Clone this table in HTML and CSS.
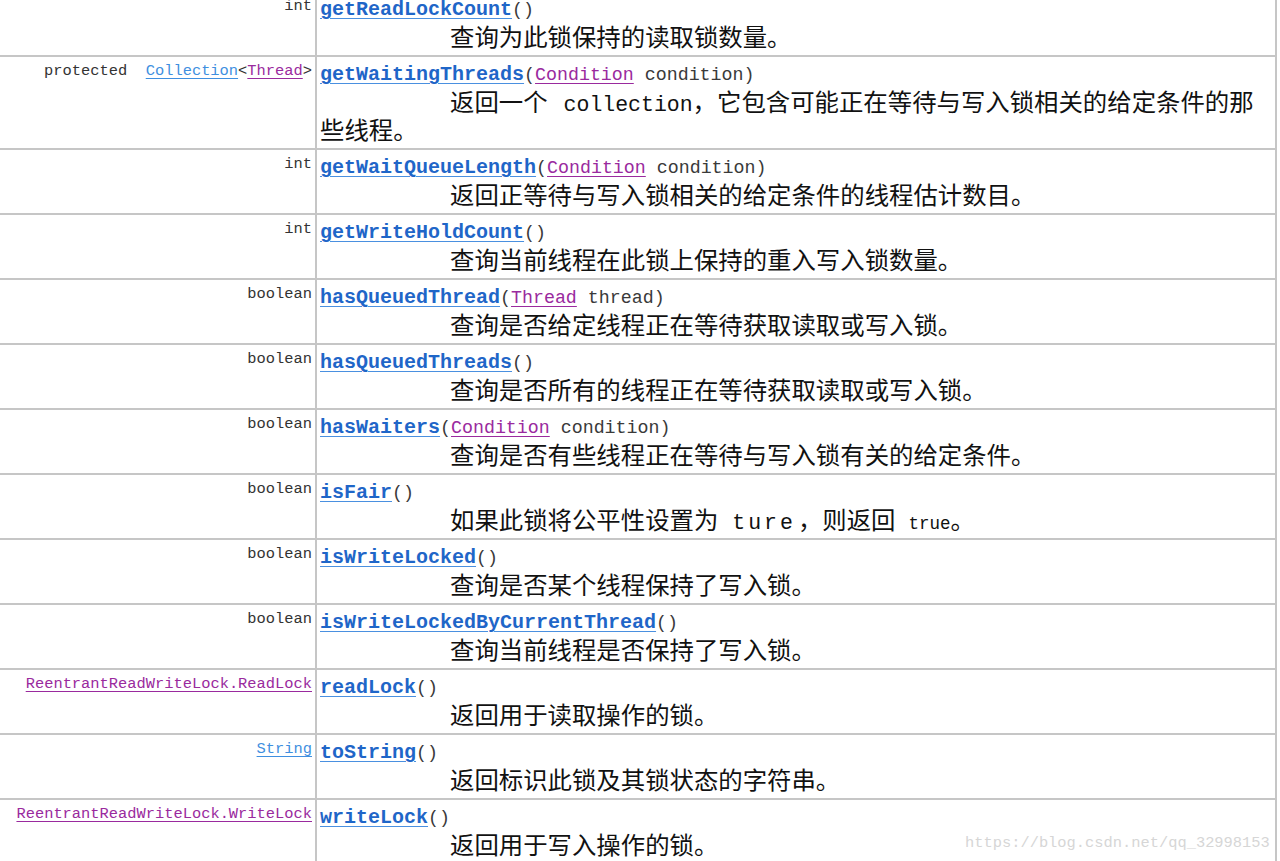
FILE: index.html
```html
<!DOCTYPE html>
<html lang="zh">
<head>
<meta charset="utf-8">
<title>ReentrantReadWriteLock</title>
<link rel="stylesheet" href="styles.css">
</head>
<body>
<div class="summary">
  <div class="row">
    <div class="type">int</div>
    <div class="member"><div class="sig"><a class="name">getReadLockCount</a>()</div><div class="desc">查询为此锁保持的读取锁数量。</div></div>
  </div>
  <div class="row">
    <div class="type">protected&nbsp;&nbsp;<a class="tlink">Collection</a>&lt;<a class="vlink">Thread</a>&gt;</div>
    <div class="member"><div class="sig"><a class="name">getWaitingThreads</a>(<a class="vlink">Condition</a> condition)</div><div class="desc">返回一个<span class="lat gap">collection</span>，它包含可能正在等待与写入锁相关的给定条件的那些线程。</div></div>
  </div>
  <div class="row">
    <div class="type">int</div>
    <div class="member"><div class="sig"><a class="name">getWaitQueueLength</a>(<a class="vlink">Condition</a> condition)</div><div class="desc">返回正等待与写入锁相关的给定条件的线程估计数目。</div></div>
  </div>
  <div class="row">
    <div class="type">int</div>
    <div class="member"><div class="sig"><a class="name">getWriteHoldCount</a>()</div><div class="desc">查询当前线程在此锁上保持的重入写入锁数量。</div></div>
  </div>
  <div class="row">
    <div class="type">boolean</div>
    <div class="member"><div class="sig"><a class="name">hasQueuedThread</a>(<a class="vlink">Thread</a> thread)</div><div class="desc">查询是否给定线程正在等待获取读取或写入锁。</div></div>
  </div>
  <div class="row">
    <div class="type">boolean</div>
    <div class="member"><div class="sig"><a class="name">hasQueuedThreads</a>()</div><div class="desc">查询是否所有的线程正在等待获取读取或写入锁。</div></div>
  </div>
  <div class="row">
    <div class="type">boolean</div>
    <div class="member"><div class="sig"><a class="name">hasWaiters</a>(<a class="vlink">Condition</a> condition)</div><div class="desc">查询是否有些线程正在等待与写入锁有关的给定条件。</div></div>
  </div>
  <div class="row">
    <div class="type">boolean</div>
    <div class="member"><div class="sig"><a class="name">isFair</a>()</div><div class="desc">如果此锁将公平性设置为<span class="lat wide">ture</span>，则返回<code class="code">true</code>。</div></div>
  </div>
  <div class="row">
    <div class="type">boolean</div>
    <div class="member"><div class="sig"><a class="name">isWriteLocked</a>()</div><div class="desc">查询是否某个线程保持了写入锁。</div></div>
  </div>
  <div class="row">
    <div class="type">boolean</div>
    <div class="member"><div class="sig"><a class="name">isWriteLockedByCurrentThread</a>()</div><div class="desc">查询当前线程是否保持了写入锁。</div></div>
  </div>
  <div class="row">
    <div class="type"><a class="vlink">ReentrantReadWriteLock.ReadLock</a></div>
    <div class="member"><div class="sig"><a class="name">readLock</a>()</div><div class="desc">返回用于读取操作的锁。</div></div>
  </div>
  <div class="row">
    <div class="type"><a class="tlink">String</a></div>
    <div class="member"><div class="sig"><a class="name">toString</a>()</div><div class="desc">返回标识此锁及其锁状态的字符串。</div></div>
  </div>
  <div class="row">
    <div class="type"><a class="vlink">ReentrantReadWriteLock.WriteLock</a></div>
    <div class="member"><div class="sig"><a class="name">writeLock</a>()</div><div class="desc">返回用于写入操作的锁。</div></div>
  </div>
</div>
<div class="watermark">https://blog.csdn.net/qq_32998153</div>
</body>
</html>
```
FILE: styles.css
```css
html, body {
  margin: 0;
  padding: 0;
  background: #ffffff;
  overflow: hidden;
}
body {
  width: 1280px;
  height: 861px;
  position: relative;
  color: #1a1a1a;
  font-family: "Liberation Mono", "Noto Sans CJK SC", monospace;
}
.summary {
  width: 1277px;
  margin-top: -8px;
}
.row {
  display: grid;
  grid-template-columns: 317px 960px;
}
.type, .member {
  box-sizing: border-box;
  border-right: 2px solid #c6c6c6;
  border-bottom: 2px solid #c6c6c6;
}
.type {
  text-align: right;
  padding: 3px 3px 0 0;
  font-size: 15.4px;
  line-height: 22px;
  color: #333333;
  white-space: nowrap;
}
.type a {
  line-height: 0;
}
.member {
  padding: 3px 6px 5px 3px;
  overflow: hidden;
}
.sig {
  height: 25px;
  padding-top: 2px;
  font-size: 18.3px;
  line-height: 27px;
  color: #3a3a3a;
  white-space: nowrap;
}
.sig a {
  line-height: 0;
}
.name {
  font-size: 20px;
  font-weight: bold;
  color: #1f66c8;
  text-decoration: underline;
  text-decoration-color: #4a90e0;
  text-decoration-thickness: 1px;
  text-underline-offset: 3px;
}
.tlink {
  color: #3f8fe0;
  text-decoration: underline;
  text-decoration-thickness: 1px;
  text-underline-offset: 3px;
}
.vlink {
  color: #9a2a9e;
  text-decoration: underline;
  text-decoration-thickness: 1px;
  text-underline-offset: 3px;
}
.desc {
  font-family: "Noto Sans CJK SC", "Liberation Sans", sans-serif;
  font-size: 24.4px;
  line-height: 28px;
  text-indent: 130px;
  color: #111111;
}
.lat {
  font-family: "Liberation Mono", monospace;
  font-size: 21.5px;
  line-height: 0;
}
.lat.gap {
  margin-left: 16px;
}
.lat.wide {
  margin-left: 14px;
  margin-right: 2px;
  letter-spacing: 3px;
}
.code {
  font-family: "Liberation Mono", monospace;
  font-size: 17.5px;
  line-height: 0;
  margin-left: 13px;
}
.watermark {
  position: absolute;
  left: 965px;
  top: 833px;
  font-size: 15.4px;
  line-height: 20px;
  color: #d6d6d6;
  font-family: "Liberation Mono", monospace;
  white-space: nowrap;
}
```
